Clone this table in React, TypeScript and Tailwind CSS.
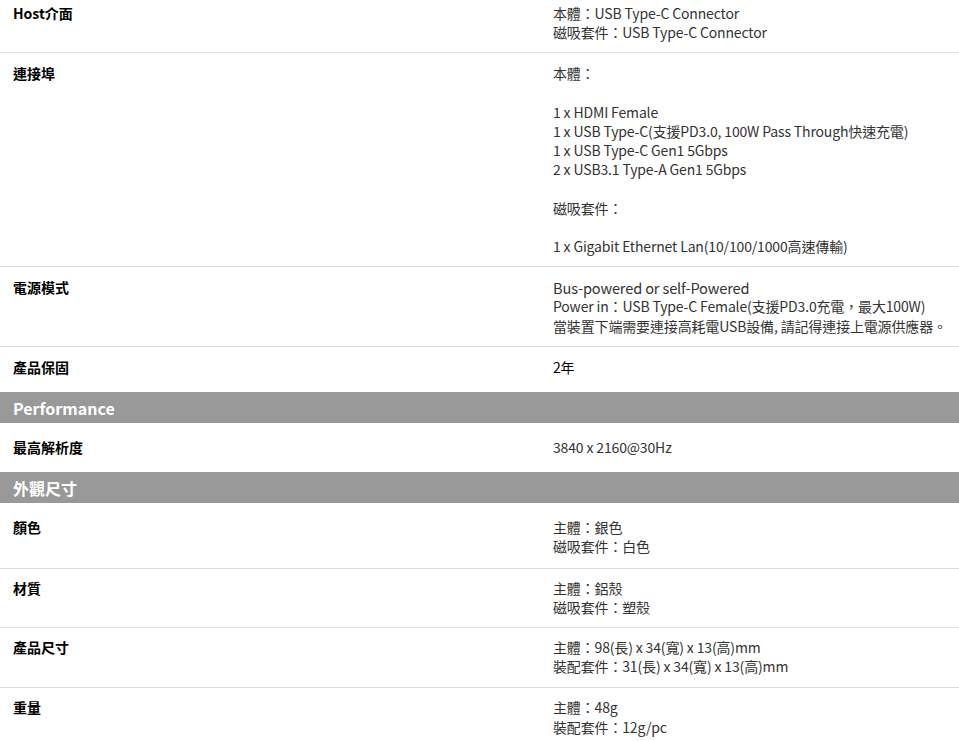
import { ReactElement, ReactNode } from "react";

type Row = {
  label: string;
  lines: ReactNode[];
  pt?: string;
  pb?: string;
  last?: boolean;
  valueClass?: string;
};

type Section = {
  title?: string;
  rows: Row[];
};

const sections: Section[] = [
  {
    rows: [
      {
        label: "Host介面",
        lines: ["本體：USB Type-C Connector", "磁吸套件：USB Type-C Connector"],
      },
      {
        label: "連接埠",
        lines: [
          "本體：",
          "",
          "1 x HDMI Female",
          "1 x USB Type-C(支援PD3.0, 100W Pass Through快速充電)",
          "1 x USB Type-C Gen1 5Gbps",
          "2 x USB3.1 Type-A Gen1 5Gbps",
          "",
          "磁吸套件：",
          "",
          "1 x Gigabit Ethernet Lan(10/100/1000高速傳輸)",
        ],
      },
      {
        label: "電源模式",
        lines: [
          <span className="text-[14.6px]">Bus-powered or self-Powered</span>,
          "Power in：USB Type-C Female(支援PD3.0充電，最大100W)",
          "當裝置下端需要連接高耗電USB設備, 請記得連接上電源供應器。",
        ],
      },
      {
        label: "產品保固",
        lines: ["2年"],
        pb: "pb-[15px]",
        last: true,
        valueClass: "text-black",
      },
    ],
  },
  {
    title: "Performance",
    rows: [
      {
        label: "最高解析度",
        lines: ["3840 x 2160@30Hz"],
        pt: "pt-[15px]",
        pb: "pb-[15px]",
        last: true,
        valueClass: "text-[12.5px]",
      },
    ],
  },
  {
    title: "外觀尺寸",
    rows: [
      {
        label: "顏色",
        lines: ["主體：銀色", "磁吸套件：白色"],
        pt: "pt-[15px]",
        pb: "pb-[11px]",
        valueClass: "text-[#111]",
      },
      {
        label: "材質",
        lines: ["主體：鋁殼", "磁吸套件：塑殼"],
        pt: "pt-[10px]",
        valueClass: "text-[#111]",
      },
      {
        label: "產品尺寸",
        lines: ["主體：98(長) x 34(寬) x 13(高)mm", "裝配套件：31(長) x 34(寬) x 13(高)mm"],
        pt: "pt-[10px]",
        pb: "pb-[11px]",
        valueClass: "text-[#111]",
      },
      {
        label: "重量",
        lines: ["主體：48g", "裝配套件：12g/pc"],
        pt: "pt-[10px]",
        valueClass: "text-[#111]",
      },
    ],
  },
];

const SpecRow = ({ row }: { row: Row }): ReactElement => (
  <div
    className={`flex ${row.pt ?? "pt-[11px]"} ${row.pb ?? "pb-[10px]"} ${
      row.last ? "" : "border-b border-[#dddddd]"
    }`}
  >
    <div className="w-[553px] shrink-0 pl-[13px] text-[14px] leading-[19.2px] font-bold text-black">
      {row.label}
    </div>
    <div
      className={`flex-1 text-[14px] leading-[19.2px] tracking-[-0.15px] text-[#333] ${row.valueClass ?? ""}`}
    >
      {row.lines.map((line, i) => (
        <div key={i} className="h-[19.2px] whitespace-nowrap">
          {line}
        </div>
      ))}
    </div>
  </div>
);

const App = (): ReactElement => {
  return (
    <div
      className="w-[959px] -mt-[7px] bg-white"
      style={{ fontFamily: '"Noto Sans CJK TC", "Noto Sans", sans-serif' }}
    >
      {sections.map((section, s) => (
        <section key={s}>
          {section.title && (
            <div className="h-[31px] bg-[#999999] pl-[13px] flex items-center text-white font-bold text-[16px]">
              {section.title}
            </div>
          )}
          {section.rows.map((row, r) => (
            <SpecRow key={r} row={row} />
          ))}
        </section>
      ))}
    </div>
  );
};

export default App;
